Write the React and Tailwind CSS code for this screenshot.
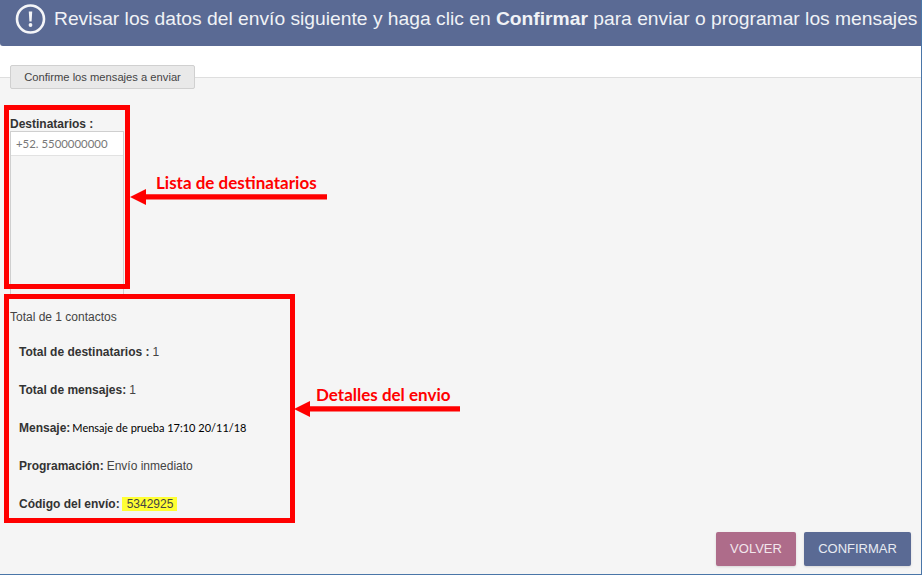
const Row = ({ label, children }) => (
  <div className="flex h-[38px] items-center pl-[9px] text-[12px] text-[#444]">
    <b className="text-[#333]">{label}</b>
    {children}
  </div>
);

const Arrow = ({ className, width }) => (
  <svg className={className} width={width} height="16" viewBox={`0 0 ${width} 16`}>
    <path d={`M0 8 L16 0 L16 5.2 L${width} 5.2 L${width} 10.5 L16 10.5 L16 16 Z`} fill="#ff0000" />
  </svg>
);

export default function App() {
  return (
    <div className="relative flex h-[575px] w-[922px] flex-col overflow-hidden border-r border-b border-[#4a76a8] bg-[#f5f5f5] font-['Liberation_Sans',sans-serif]">
      {/* Banner */}
      <div className="flex h-[46px] shrink-0 items-center gap-[7px] rounded-bl-[3px] bg-[#5a6a94] pb-[8px] pl-[15px] text-[19.25px] whitespace-nowrap text-[#f0f2f6]">
        <svg width="32" height="32" viewBox="0 0 32 32" className="shrink-0">
          <circle cx="15.5" cy="16" r="13.5" fill="none" stroke="#f4f5f8" strokeWidth="2.6" />
          <path d="M13.8 8.5h3.4l-.6 10h-2.2z" fill="#f4f5f8" />
          <circle cx="15.5" cy="22" r="1.9" fill="#f4f5f8" />
        </svg>
        <span>
          Revisar los datos del envío siguiente y haga clic en <b>Confirmar</b> para enviar o programar los mensajes
        </span>
      </div>

      {/* Tab strip */}
      <div className="flex h-[32px] shrink-0 items-end border-b border-[#dedede] bg-white pl-[10px]">
        <div className="mb-[-12px] flex h-[24px] w-[185px] items-center justify-center rounded-[2px] border border-[#d0d0d0] bg-[#e9e9e9] text-[11.2px] text-[#444]">
          Confirme los mensajes a enviar
        </div>
      </div>

      {/* Content */}
      <div className="flex flex-1 flex-col pt-[39px] pl-[10px]">
        <div className="text-[12px] leading-[14px] font-bold text-[#333]">Destinatarios :</div>
        <div className="h-[165px] w-[114px] shrink-0 border border-[#cfcfcf] bg-[#f5f5f5]">
          <div className="flex h-[24px] items-center border-b border-[#e2e2e2] bg-white pl-[5px] font-['Lato',sans-serif] text-[11.4px] text-[#777]">
            +52. 5500000000
          </div>
        </div>

        <div className="mt-[14px] text-[12px] leading-[14px] text-[#444]">Total de 1 contactos</div>
        <div className="mt-[9px] flex flex-col">
          <Row label="Total de destinatarios :">
            <span className="ml-[3px]">1</span>
          </Row>
          <Row label="Total de mensajes:">
            <span className="ml-[3px]">1</span>
          </Row>
          <Row label="Mensaje:">
            <span className="ml-[2px] font-['Lato',sans-serif] text-[11px] text-black">Mensaje de prueba 17:10 20/11/18</span>
          </Row>
          <Row label="Programación:">
            <span className="ml-[3px]">Envío inmediato</span>
          </Row>
          <Row label="Código del envío:">
            <span className="ml-[2px] bg-[#ffff33] pr-1 pl-[5px] leading-[14px]">5342925</span>
          </Row>
        </div>

        <div className="mt-[9px] flex justify-end gap-2 pr-[10px]">
          <button className="h-[34px] w-[80px] rounded-[2px] bg-[#ae6c8a] text-[13px] text-[#f2e6ec] shadow-sm">VOLVER</button>
          <button className="h-[34px] w-[107px] rounded-[2px] bg-[#5a6a94] text-[13px] text-[#e8ebf2] shadow-sm">CONFIRMAR</button>
        </div>
      </div>

      {/* Red annotations over the screenshot */}
      <div className="absolute top-[105px] left-[4px] h-[184px] w-[126px] border-[5px] border-[#ff0000]" />
      <div className="absolute top-[294px] left-[4px] h-[229px] w-[291px] border-[5px] border-[#ff0000]" />
      <Arrow className="absolute top-[189px] left-[130px]" width={197} />
      <Arrow className="absolute top-[401px] left-[294px]" width={166} />
      <span className="absolute top-[172px] left-[156px] font-['Lato',sans-serif] text-[17px] leading-[22px] font-bold whitespace-nowrap text-[#ff0000]">
        Lista de destinatarios
      </span>
      <span className="absolute top-[384px] left-[316px] font-['Lato',sans-serif] text-[17px] leading-[22px] font-bold whitespace-nowrap text-[#ff0000]">
        Detalles del envio
      </span>
    </div>
  );
}
